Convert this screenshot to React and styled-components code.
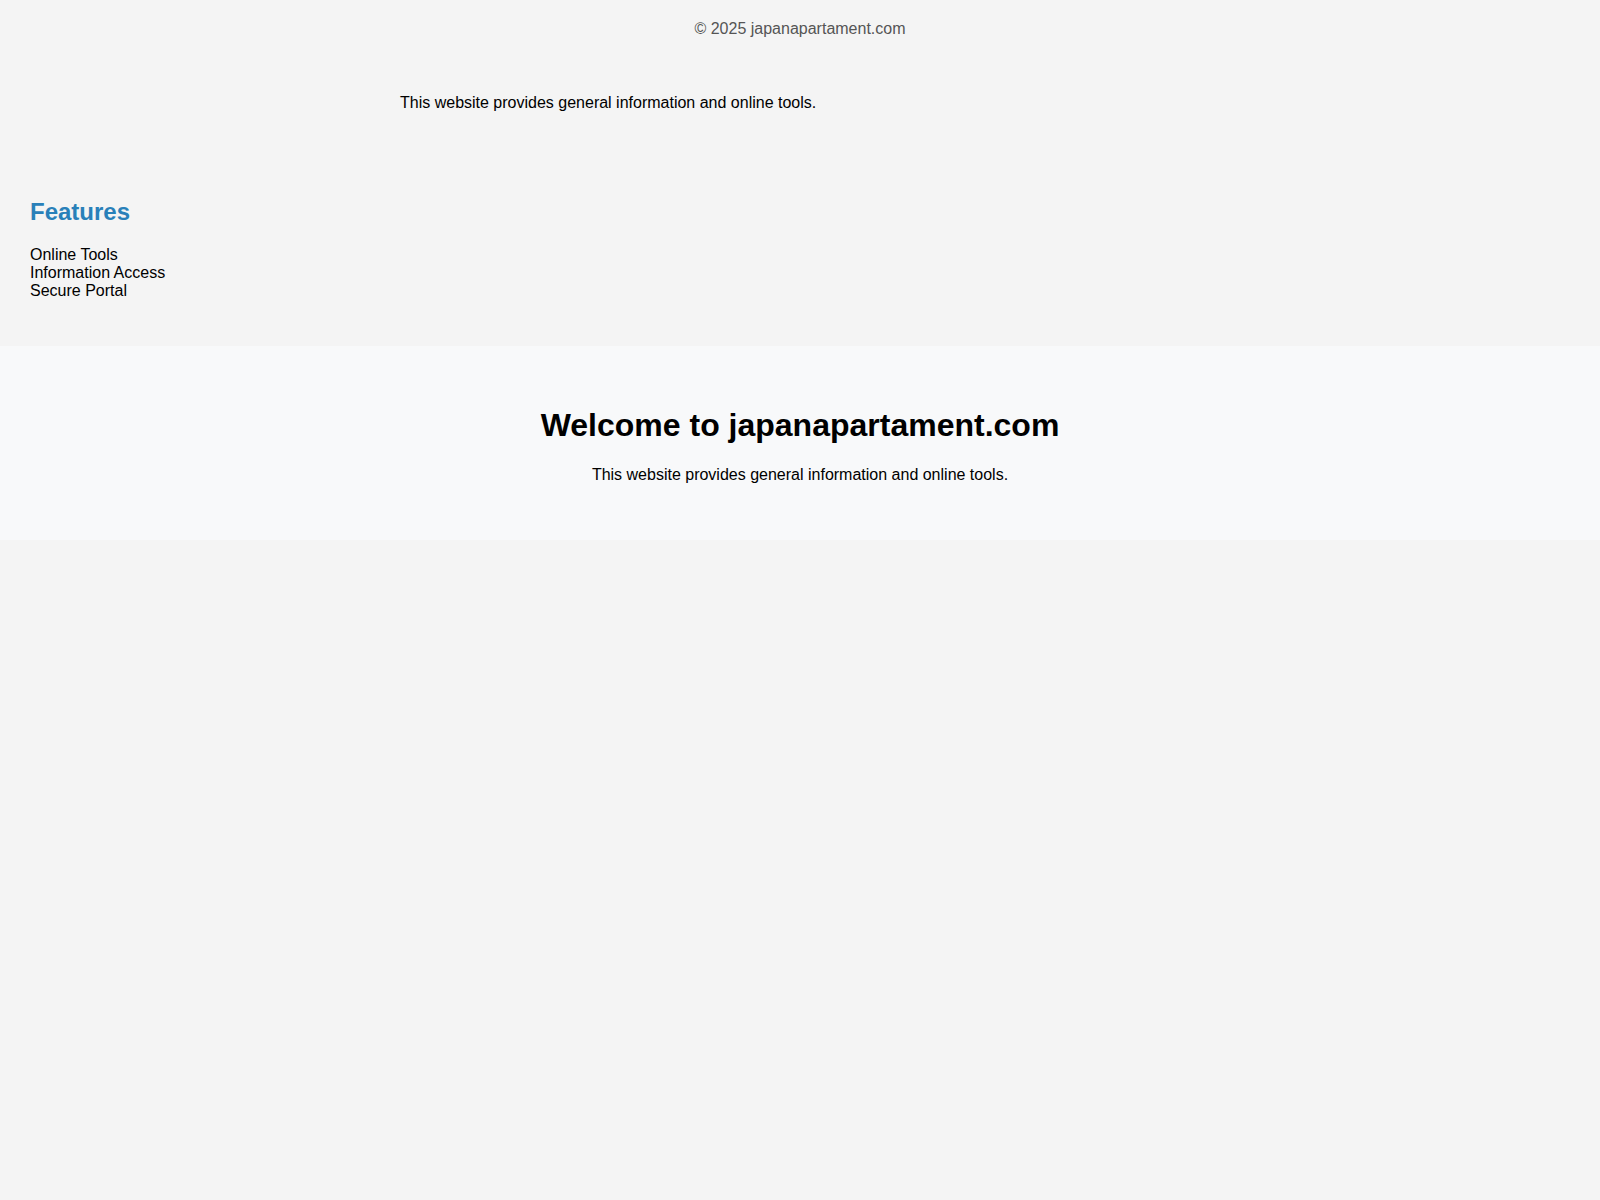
import React from 'react';
import styled, { createGlobalStyle } from 'styled-components';

const GlobalStyle = createGlobalStyle`
	body {
		margin: 0;
		background: #f4f4f4;
		font-family: 'Liberation Sans', Arial, sans-serif;
		color: #000;
	}
`;

const Footer = styled.footer`
	padding: 20px;
	text-align: center;
	color: #555;
	font-size: 16px;
`;

const Container = styled.div`
	max-width: 800px;
	margin: 0 auto;
	padding: 20px 0;
	p {
		margin: 16px 0;
	}
`;

const Features = styled.section`
	padding: 30px;
	h2 {
		color: #2980b9;
		font-size: 24px;
		margin: 0.83em 0;
	}
	ul {
		list-style: none;
		margin: 16px 0;
		padding: 0;
	}
`;

const Hero = styled.section`
	background: #f8f9fa;
	padding: 40px;
	text-align: center;
	h1 {
		font-size: 32px;
		margin: 0.67em 0;
	}
	p {
		margin: 16px 0;
	}
`;

const App = () => {
	return (
		<>
			<GlobalStyle />
			<Footer>© 2025 japanapartament.com</Footer>
			<Container>
				<p>This website provides general information and online tools.</p>
			</Container>
			<Features>
				<h2>Features</h2>
				<ul>
					<li>Online Tools</li>
					<li>Information Access</li>
					<li>Secure Portal</li>
				</ul>
			</Features>
			<Hero>
				<h1>Welcome to japanapartament.com</h1>
				<p>This website provides general information and online tools.</p>
			</Hero>
		</>
	);
};

export default App;
